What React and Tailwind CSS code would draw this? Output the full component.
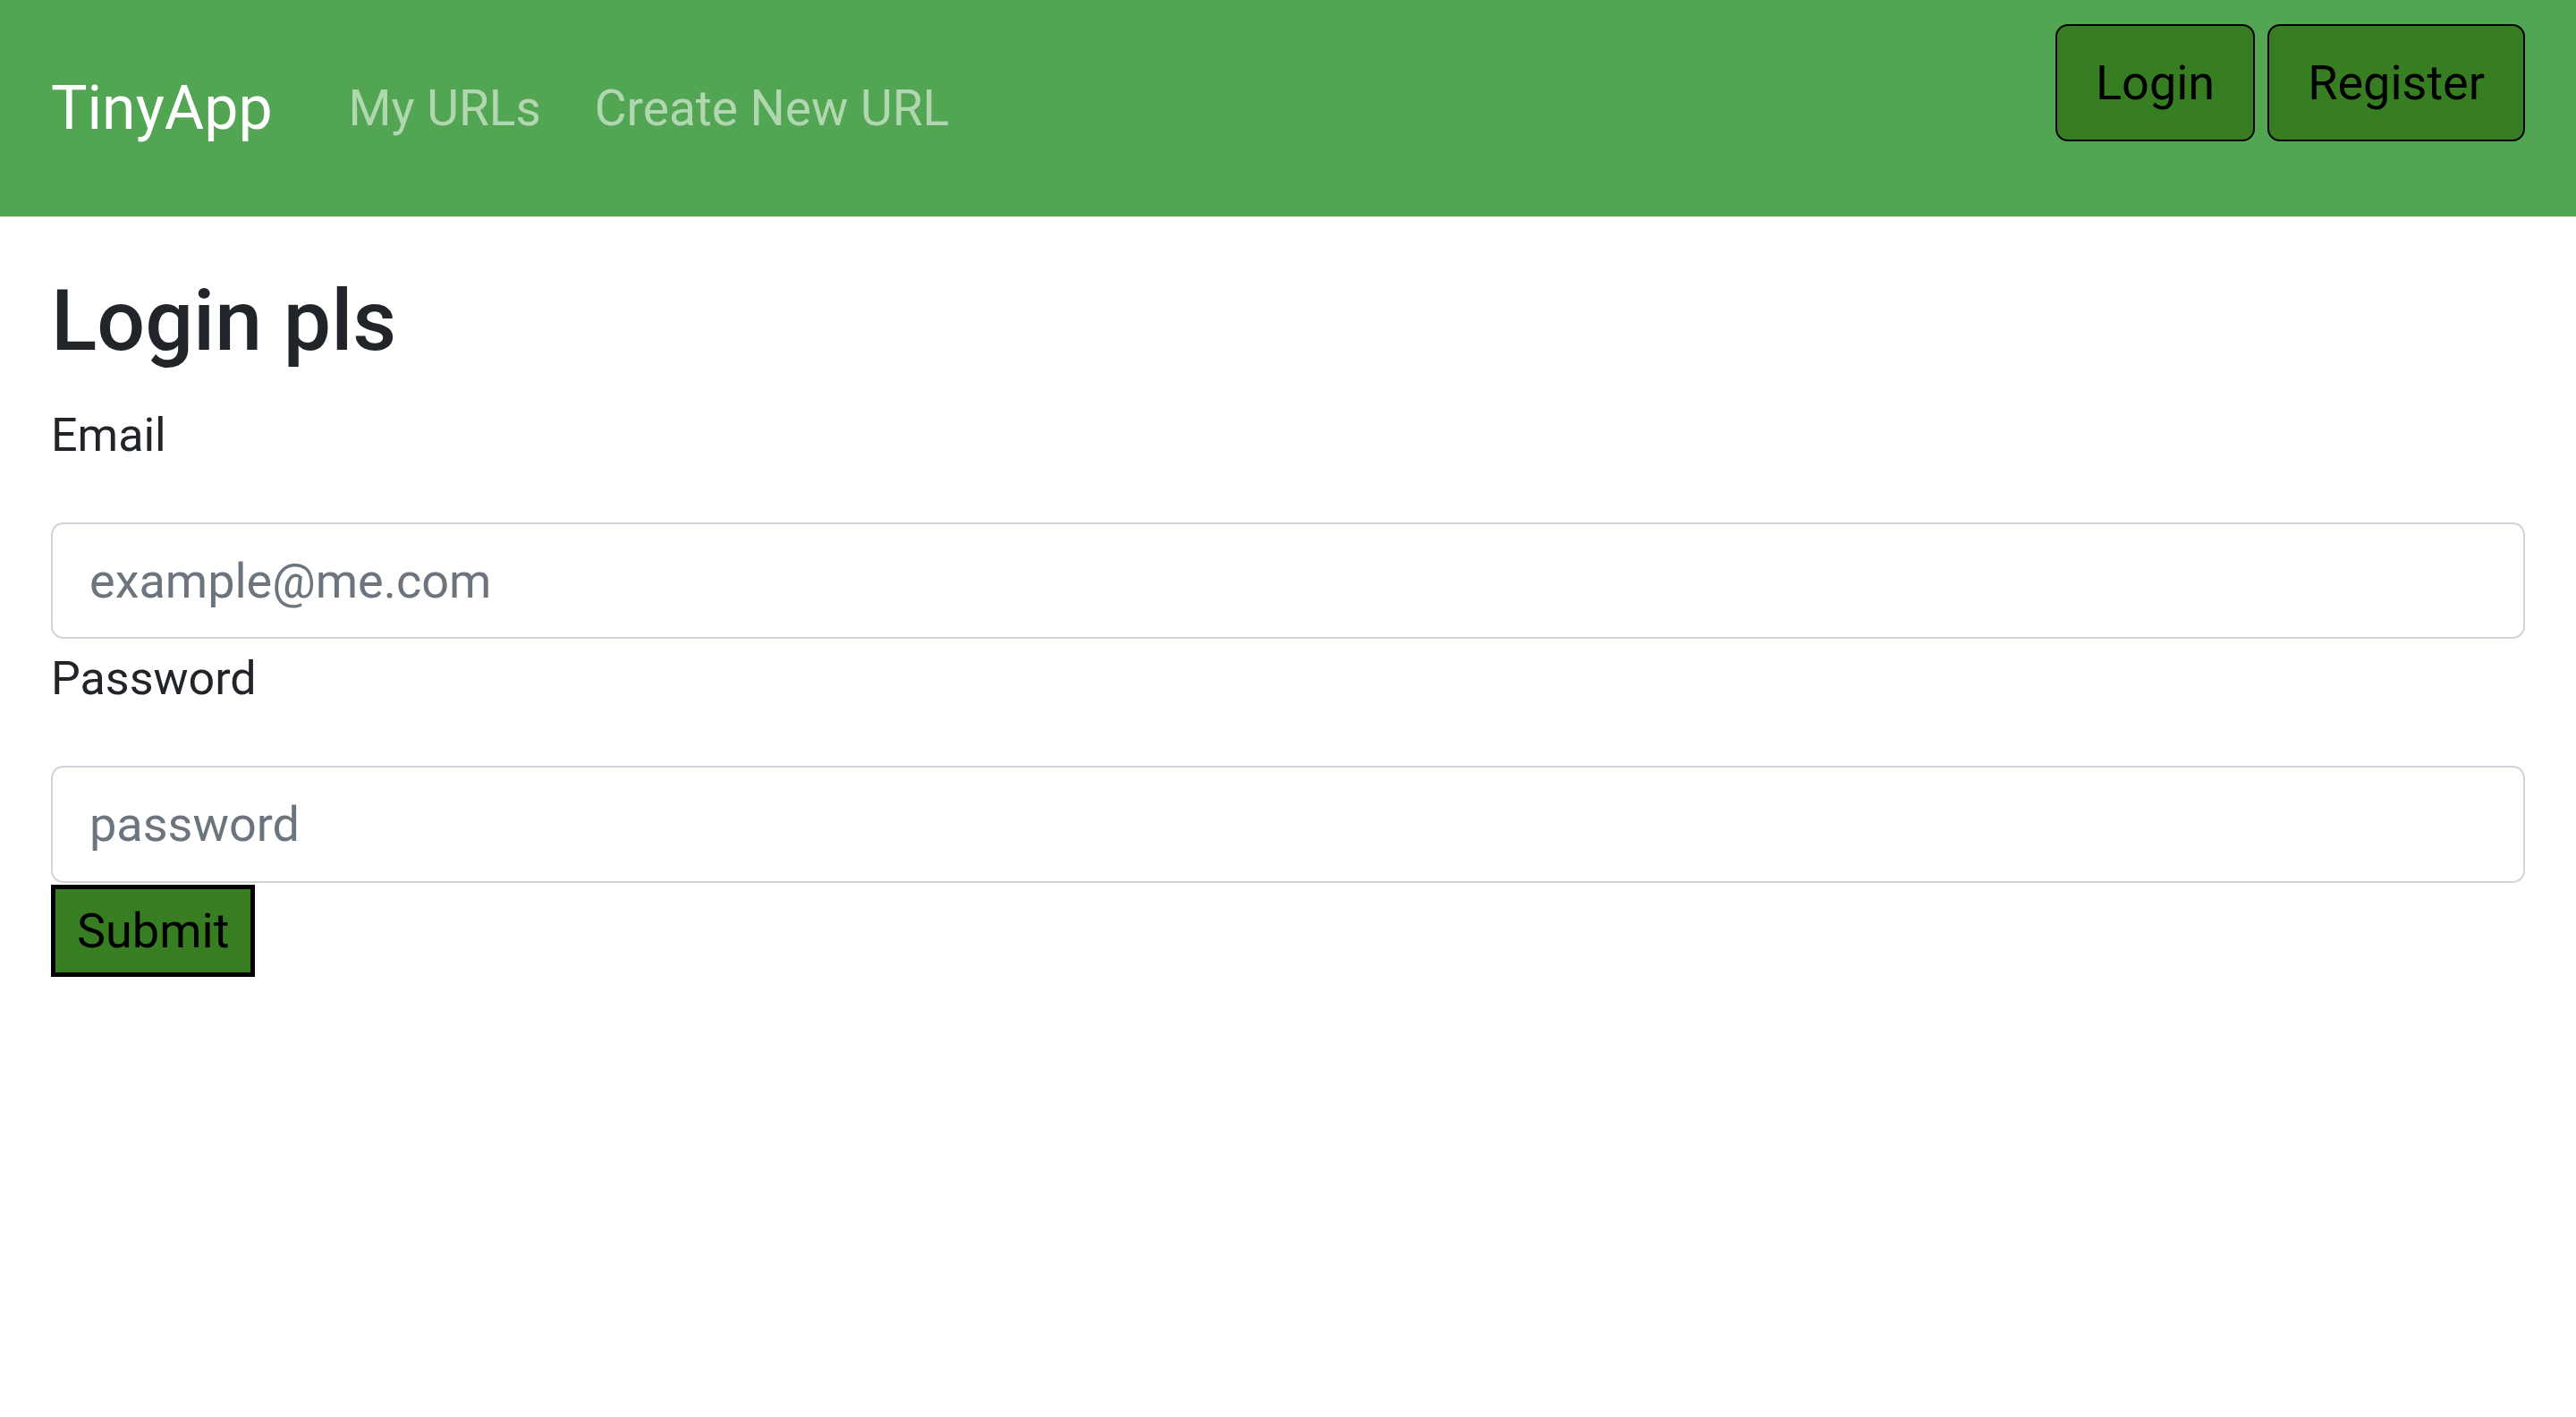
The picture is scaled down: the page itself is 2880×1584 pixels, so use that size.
import React from "react";

const font = "font-['Roboto','Liberation_Sans',sans-serif]";

function NavButton({ children }) {
  return (
    <button
      type="button"
      className="rounded-[14px] border-2 border-black bg-[#377e22] px-[43px] py-[23px] text-[54px] leading-[81px] text-black"
    >
      {children}
    </button>
  );
}

export default function App() {
  return (
    <div className={`min-h-screen bg-white text-[#212529] ${font}`}>
      <nav className="flex h-[242px] justify-between bg-[#52a552] px-[57px]">
        <div className="flex items-center">
          <a href="#" className="mr-[55px] text-[68px] leading-[102px] text-white">
            TinyApp
          </a>
          <a href="#" className="px-[30px] text-[55px] leading-[82px] text-white/55">
            My URLs
          </a>
          <a href="#" className="px-[30px] text-[55px] leading-[82px] text-white/55">
            Create New URL
          </a>
        </div>

        <div className="flex items-start gap-[14px] pt-[27px]">
          <NavButton>Login</NavButton>
          <NavButton>Register</NavButton>
        </div>
      </nav>

      <main className="px-[57px] pt-[60px]">
        <h1 className="text-[95px] font-medium leading-[1.2]">Login pls</h1>

        <form onSubmit={(e) => e.preventDefault()}>
          <label htmlFor="email" className="mt-[30px] block text-[52px] leading-[81px]">
            Email
          </label>
          <input
            id="email"
            type="email"
            placeholder="example@me.com"
            className="mt-[57px] block h-[130px] w-full rounded-[14px] border-2 border-[#ced4da] px-[41px] text-[54px] outline-none placeholder:text-[#6c757d]"
          />

          <label htmlFor="password" className="mt-[4px] block text-[52px] leading-[81px]">
            Password
          </label>
          <input
            id="password"
            type="password"
            placeholder="password"
            className="mt-[57px] block h-[131px] w-full rounded-[14px] border-2 border-[#ced4da] px-[41px] text-[54px] outline-none placeholder:text-[#6c757d]"
          />

          <button
            type="submit"
            className="mt-[2px] block border-[5px] border-black bg-[#377e22] px-[24px] py-[6px] text-[54px] leading-[81px] text-black"
          >
            Submit
          </button>
        </form>
      </main>
    </div>
  );
}
